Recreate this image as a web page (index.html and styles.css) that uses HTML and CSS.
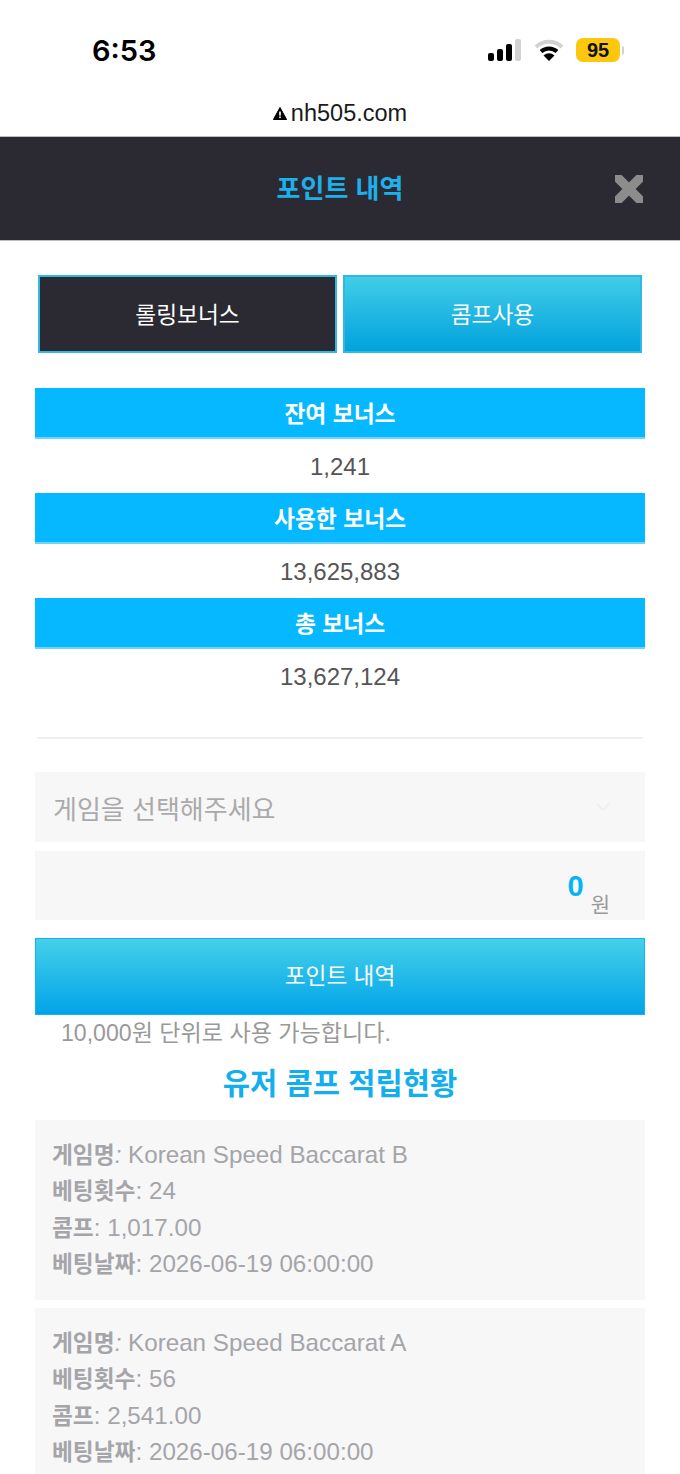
FILE: index.html
```html
<!DOCTYPE html>
<html lang="ko">
    <head>
        <meta charset="UTF-8" />
        <title>포인트 내역</title>
        <link rel="stylesheet" href="styles.css">
    </head>

    <body>
        <div class="screen">
            <div class="status-bar">
                <span class="clock">6:53</span>
                <div class="status-icons">
                    <svg class="signal" width="34" height="22" viewBox="0 0 34 22">
                        <rect x="0" y="14" width="6" height="8" rx="2" fill="#000" />
                        <rect x="9" y="10" width="6" height="12" rx="2" fill="#000" />
                        <rect x="18" y="5" width="6" height="17" rx="2" fill="#000" />
                        <rect x="27" y="0" width="6" height="22" rx="2" fill="#d2d2d2" />
                    </svg>
                    <svg class="wifi" width="30" height="22" viewBox="0 0 30 22">
                        <path d="M2 8 A19 19 0 0 1 28 8" fill="none" stroke="#d2d2d2" stroke-width="4" />
                        <path d="M7 12.5 A12 12 0 0 1 23 12.5" fill="none" stroke="#000" stroke-width="4" />
                        <path d="M15 22 L9.5 16.5 A8 8 0 0 1 20.5 16.5 Z" fill="#000" />
                    </svg>
                    <span class="battery">95</span>
                    <span class="battery-tip"></span>
                </div>
            </div>

            <div class="url-bar">
                <svg width="14" height="13" viewBox="0 0 14 13">
                    <path d="M7 0.5 L13.6 12.5 H0.4 Z" fill="#000" stroke="#000" stroke-linejoin="round" />
                    <rect x="6.2" y="4.5" width="1.6" height="4.2" fill="#fff" />
                    <rect x="6.2" y="9.5" width="1.6" height="1.6" fill="#fff" />
                </svg>
                <span>nh505.com</span>
            </div>

            <div class="title-bar">
                <h1>포인트 내역</h1>
                <svg class="close" width="28" height="28" viewBox="0 0 28 28">
                    <path d="M3.5 3.5 L24.5 24.5 M24.5 3.5 L3.5 24.5" stroke="#8c8c8c" stroke-width="9.5" stroke-linecap="round" />
                </svg>
            </div>

            <div class="content">
                <div class="tabs">
                    <div class="tab tab-active">롤링보너스</div>
                    <div class="tab">콤프사용</div>
                </div>

                <div class="stats">
                    <div class="stat-head">잔여 보너스</div>
                    <div class="stat-value">1,241</div>
                    <div class="stat-head">사용한 보너스</div>
                    <div class="stat-value">13,625,883</div>
                    <div class="stat-head">총 보너스</div>
                    <div class="stat-value">13,627,124</div>
                </div>

                <hr class="divider" />

                <div class="field field-select">
                    <span>게임을 선택해주세요</span>
                    <svg width="14" height="8" viewBox="0 0 14 8">
                        <path d="M1 1 L7 7 L13 1" fill="none" stroke="#efefef" stroke-width="2" />
                    </svg>
                </div>
                <div class="field field-amount">
                    <span class="amount">0</span>
                    <span class="unit">원</span>
                </div>

                <div class="submit">포인트 내역</div>
                <p class="note">10,000원 단위로 사용 가능합니다.</p>

                <h2 class="section-title">유저 콤프 적립현황</h2>

                <div class="record">
                    <p><b>게임명</b><i>:</i> Korean Speed Baccarat B</p>
                    <p><b>베팅횟수</b>: 24</p>
                    <p><b>콤프</b>: 1,017.00</p>
                    <p><b>베팅날짜</b>: 2026-06-19 06:00:00</p>
                </div>
                <div class="record">
                    <p><b>게임명</b><i>:</i> Korean Speed Baccarat A</p>
                    <p><b>베팅횟수</b>: 56</p>
                    <p><b>콤프</b>: 2,541.00</p>
                    <p><b>베팅날짜</b>: 2026-06-19 06:00:00</p>
                </div>
            </div>
        </div>
    </body>
</html>
```

FILE: styles.css
```css
* {
    margin: 0;
    padding: 0;
    box-sizing: border-box;
}

body {
    background-color: #fff;
    font-family: "Liberation Sans", "Noto Sans CJK KR", sans-serif;
}

.screen {
    height: 100vh;
    overflow: hidden;
}

.status-bar {
    height: 92px;
    padding: 8px 56px 0 92px;
    display: flex;
    justify-content: space-between;
    align-items: center;
}

.clock {
    font-family: "Inter", sans-serif;
    font-size: 29px;
    font-weight: 600;
    color: #000;
}

.status-icons {
    display: flex;
    align-items: center;
}

.signal {
    margin-right: 12px;
}

.wifi {
    margin-right: 12px;
}

.battery {
    width: 44px;
    height: 24px;
    border-radius: 7px;
    background-color: #fcc70c;
    color: #111;
    font-size: 20px;
    font-weight: 700;
    line-height: 24px;
    text-align: center;
}

.battery-tip {
    width: 2px;
    height: 9px;
    margin-left: 2px;
    border-radius: 0 2px 2px 0;
    background-color: #d2d2d2;
}

.url-bar {
    height: 44px;
    padding-bottom: 2px;
    display: flex;
    justify-content: center;
    align-items: center;
    gap: 4px;
    font-size: 23.5px;
    color: #1a1a1a;
}

.title-bar {
    position: relative;
    height: 105px;
    border-top: 1px solid #bdbdc0;
    border-bottom: 1px solid #bdbdc0;
    background-color: #2b2a33;
    display: flex;
    justify-content: center;
    align-items: center;
    padding-bottom: 4px;
}

.title-bar h1 {
    font-size: 26px;
    font-weight: 700;
    color: #1eb0ea;
}

.close {
    position: absolute;
    right: 37px;
    top: 38px;
}

.content {
    padding: 34px 35px 0;
}

.tabs {
    padding: 0 3px;
    display: flex;
    gap: 6px;
}

.tab {
    flex: 1;
    height: 78px;
    border: 2px solid #2fb9e2;
    background: linear-gradient(#42cde8, #01a2dd);
    color: #fff;
    font-size: 22.7px;
    line-height: 76px;
    text-align: center;
}

.tab-active {
    background: #2b2a33;
}

.stats {
    margin-top: 35px;
}

.stat-head {
    height: 51px;
    border-bottom: 2px solid #6fd2f7;
    background-color: #06b8ff;
    color: #fff;
    font-size: 22.8px;
    font-weight: 700;
    line-height: 52px;
    text-align: center;
}

.stat-value {
    height: 54px;
    color: #555;
    font-size: 24px;
    line-height: 56px;
    text-align: center;
}

.divider {
    margin: 34px 2px 0;
    border: none;
    border-top: 2px solid #f0f0f0;
}

.field {
    background-color: #f7f7f8;
    display: flex;
}

.field-select {
    height: 70px;
    margin-top: 33px;
    padding: 0 35px 0 18px;
    justify-content: space-between;
    align-items: center;
    color: #aaa;
    font-size: 26px;
}

.field-amount {
    height: 69px;
    margin-top: 9px;
    padding: 0 35px 0 18px;
    justify-content: flex-end;
    align-items: flex-start;
}

.amount {
    margin-top: 19px;
    color: #06b4f5;
    font-size: 29px;
    font-weight: 700;
}

.unit {
    margin: 37px 0 0 7px;
    color: #999;
    font-size: 21px;
}

.submit {
    height: 77px;
    margin-top: 18px;
    border: 1px solid #12b3f2;
    background: linear-gradient(#45d0ea, #01a4e8);
    color: #fff;
    font-size: 22.7px;
    line-height: 75px;
    text-align: center;
}

.note {
    margin-left: 26px;
    color: #999;
    font-size: 23.1px;
    line-height: 36px;
}

.section-title {
    margin-top: 8px;
    color: #12aeee;
    font-size: 29.6px;
    font-weight: 700;
    line-height: 50px;
    text-align: center;
}

.record {
    height: 180px;
    margin-top: 11px;
    padding: 17px 17px;
    background-color: #f7f7f8;
    color: #a5a5a9;
    font-size: 24.2px;
    line-height: 36.4px;
}

.record + .record {
    margin-top: 8px;
}

.record b {
    font-size: 22.7px;
    font-weight: 700;
}

.record i {
    font-style: italic;
}
```
